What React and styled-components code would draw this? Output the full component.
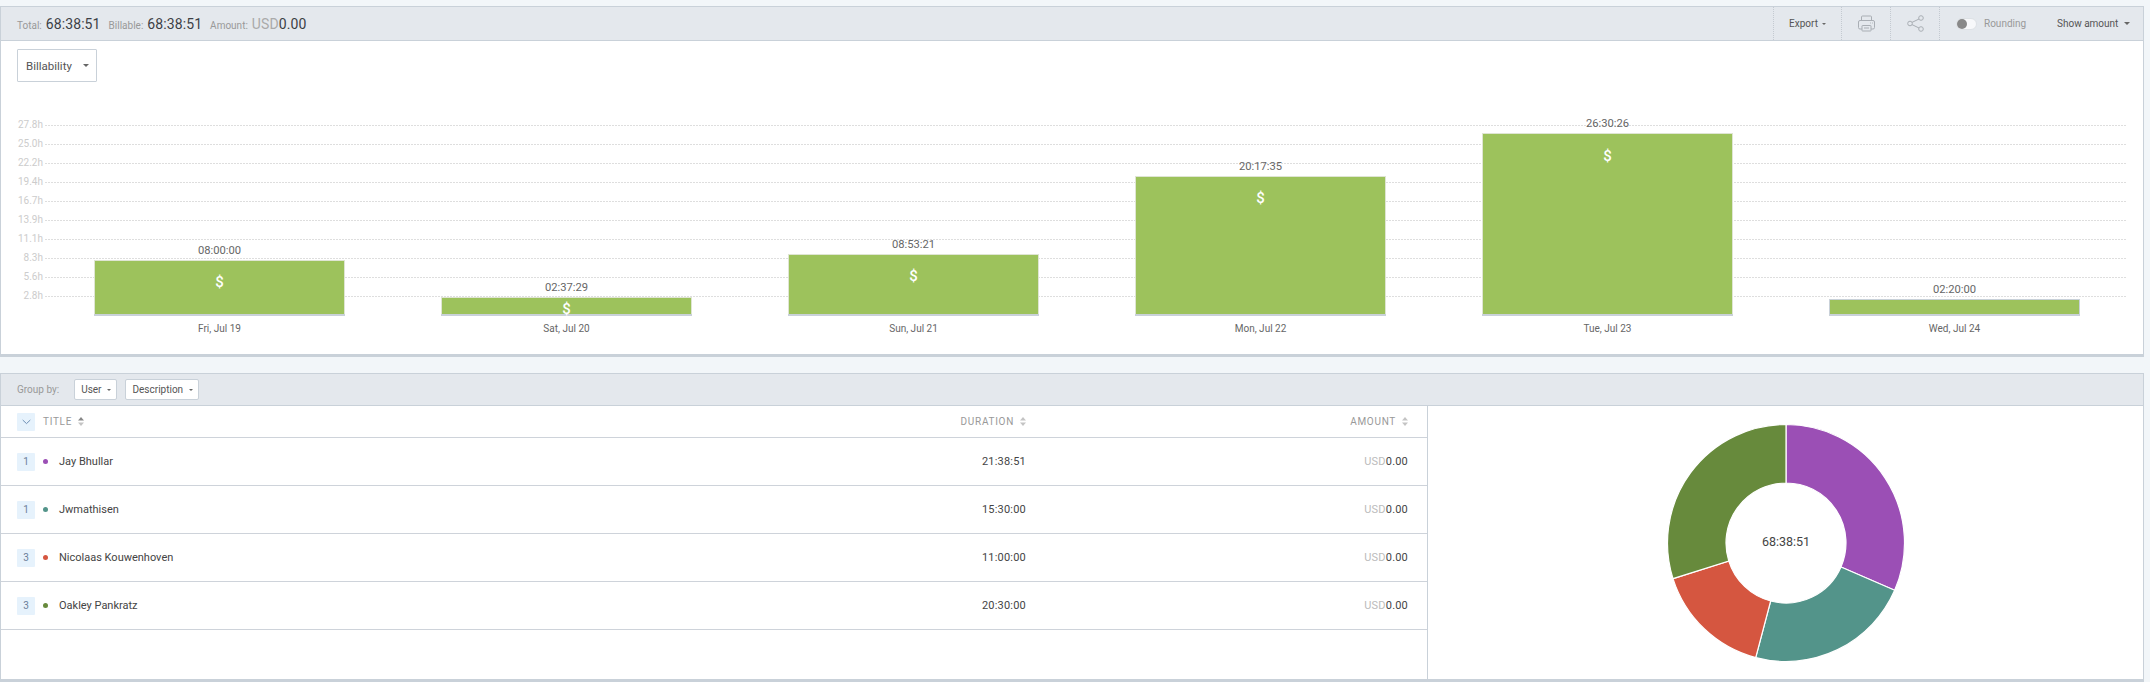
import React from 'react'
import styled, { createGlobalStyle } from 'styled-components'

const GlobalStyle = createGlobalStyle`
    html, body {
        margin: 0;
        padding: 0;
        background: #f2f6f9;
    }
    body {
        font-family: Roboto, "Liberation Sans", sans-serif;
    }
`

const Page = styled.div`
    width: 2144px;
    height: 682px;
    padding-top: 6px;
    box-sizing: border-box;
    overflow: hidden;
`
const Panel = styled.section`
    border: solid #c9d1d9;
    border-width: 1px 1px 3px 1px;
    background: #fff;
    box-sizing: border-box;
    height: ${props => props.height}px;
    margin-bottom: ${props => props.gap || 0}px;
    display: flex;
    flex-direction: column;
`
const Toolbar = styled.header`
    background: #e4e8ed;
    border-bottom: 1px solid #c9d1d9;
    height: ${props => props.height}px;
    flex: none;
    box-sizing: border-box;
    display: flex;
    align-items: center;
    padding-left: 16px;
`
const Stat = styled.span`
    font-size: 10px;
    color: #999;
    margin-right: 8px;
    display: flex;
    align-items: baseline;
    gap: 4px;
`
const StatValue = styled.span`
    font-size: 14px;
    color: #3c3f45;
    letter-spacing: .1px;
`
const Currency = styled.span`
    color: ${props => props.large ? '#aaa' : '#bbb'};
`
const Tools = styled.div`
    margin-left: auto;
    display: flex;
    align-items: stretch;
    height: 100%;
`
const ToolCell = styled.div`
    width: ${props => props.width}px;
    border-left: 1px dotted #c4cad1;
    display: flex;
    align-items: center;
    justify-content: center;
    font-size: 10px;
    color: #555;
    gap: 4px;
    box-sizing: border-box;
`
const Caret = styled.i`
    display: inline-block;
    width: 0;
    height: 0;
    border: solid transparent;
    border-width: ${props => props.size || 3}px ${props => props.size || 3}px 0;
    border-top-color: #666;
`
const RoundingCell = styled.div`
    width: 102px;
    border-left: 1px dotted #c4cad1;
    display: flex;
    align-items: center;
    padding-left: 16px;
    box-sizing: border-box;
    font-size: 10px;
    color: #999;
    gap: 7px;
`
const Switch = styled.span`
    width: 21px;
    height: 12px;
    border-radius: 6px;
    background: #f7f8fa;
    border: 1px solid #dde1e5;
    box-sizing: border-box;
    display: flex;
    align-items: center;
    &::before {
        content: '';
        width: 10px;
        height: 10px;
        border-radius: 50%;
        background: #888;
    }
`
const ShowAmount = styled.div`
    width: 102px;
    display: flex;
    align-items: center;
    padding-left: 16px;
    box-sizing: border-box;
    font-size: 10px;
    color: #555;
    gap: 6px;
`
const ChartBody = styled.div`
    flex: 1;
    padding: 8px 16px 0;
    min-height: 0;
`
const FilterSelect = styled.div`
    width: 80px;
    height: 33px;
    border: 1px solid #c9d1d9;
    border-radius: 1px;
    box-sizing: border-box;
    display: flex;
    align-items: center;
    padding-left: 8px;
    margin-bottom: 8px;
    font-size: 11.5px;
    color: #555;
    gap: 11px;
    background: #fff;
`
const ChartSvg = styled.svg`
    display: block;
    margin-left: -16px;
    font-family: Roboto, "Liberation Sans", sans-serif;
`
const GroupLabel = styled.span`
    font-size: 10px;
    color: #999;
    margin-right: 15px;
`
const GroupSelect = styled.div`
    height: 21px;
    background: #fff;
    border: 1px solid #c9d1d9;
    border-radius: 2px;
    box-sizing: border-box;
    display: flex;
    align-items: center;
    padding: 0 5px 0 6px;
    font-size: 10px;
    color: #555;
    gap: 6px;
    margin-right: 8px;
`
const SplitBody = styled.div`
    flex: 1;
    display: flex;
    min-height: 0;
`
const TableWrap = styled.div`
    width: 1426px;
    flex: none;
    border-right: 1px solid #c9d1d9;
`
const Row = styled.div`
    display: flex;
    align-items: center;
    height: ${props => props.height || 48}px;
    border-bottom: 1px solid #ced3da;
    box-sizing: border-box;
    padding-left: 16px;
    font-size: 11px;
    color: #444;
`
const Badge = styled.span`
    width: 18px;
    height: 18px;
    background: #e6f2fc;
    border-radius: 1px;
    display: flex;
    align-items: center;
    justify-content: center;
    font-size: 10px;
    color: #6b7f99;
    flex: none;
    margin-right: 8px;
`
const TitleCell = styled.div`
    flex: 1;
    display: flex;
    align-items: center;
    min-width: 0;
`
const Dot = styled.i`
    width: 5px;
    height: 5px;
    border-radius: 50%;
    background: ${props => props.color};
    margin-right: 11px;
    flex: none;
`
const NumCell = styled.div`
    width: ${props => props.width}px;
    padding-right: ${props => props.pad || 0}px;
    box-sizing: border-box;
    text-align: right;
    flex: none;
    letter-spacing: .2px;
`
const HeadCell = styled.div`
    width: ${props => props.width}px;
    flex: none;
    display: flex;
    justify-content: flex-end;
    align-items: center;
    font-size: 10px;
    color: #999;
    letter-spacing: .7px;
    gap: 6px;
    padding-right: ${props => props.pad || 0}px;
    box-sizing: border-box;
`
const HeadTitle = styled(TitleCell)`
    font-size: 10px;
    color: #999;
    letter-spacing: .7px;
    gap: 6px;
`
const DonutPane = styled.div`
    flex: 1;
    display: flex;
    align-items: center;
    justify-content: center;
`
const DonutSvg = styled.svg`
    display: block;
    font-family: Roboto, "Liberation Sans", sans-serif;
`

const SortIcon = ({ active }) => (
    <svg width="6" height="9" viewBox="0 0 6 9">
        <path d="M3 0L6 3.4H0Z" fill={active ? '#888' : '#c4c4c4'} />
        <path d="M3 9L0 5.6H6Z" fill="#c4c4c4" />
    </svg>
)

const PrintIcon = () => (
    <svg width="17" height="17" viewBox="0 0 17 17" fill="none" stroke="#a9aeb4" strokeWidth="1">
        <path d="M3.5 5.5V2a1 1 0 0 1 1-1h8a1 1 0 0 1 1 1v3.5" />
        <rect x=".5" y="5.5" width="16" height="8.5" rx="1.5" />
        <rect x="4" y="10.5" width="9" height="5.5" rx=".5" fill="#e4e8ed" />
        <path d="M6 13h5M12 8h.8M14 8h.8" />
    </svg>
)

const ShareIcon = () => (
    <svg width="17" height="17" viewBox="0 0 17 17" fill="none" stroke="#a9aeb4" strokeWidth="1">
        <circle cx="3" cy="8.5" r="2.3" />
        <circle cx="14" cy="3" r="2.3" />
        <circle cx="14" cy="14" r="2.3" />
        <path d="M5 7.4l7-3.4M5 9.6l7 3.4" />
    </svg>
)

const ChevronIcon = () => (
    <svg width="9" height="6" viewBox="0 0 9 6" fill="none" stroke="#6f8fb5" strokeWidth="1">
        <path d="M.7 1l3.8 3.6L8.3 1" />
    </svg>
)

const axisTicks = ['27.8h', '25.0h', '22.2h', '19.4h', '16.7h', '13.9h', '11.1h', '8.3h', '5.6h', '2.8h']

const bars = [
    { x: 94, top: 260, time: '08:00:00', date: 'Fri, Jul 19', moneyY: 287 },
    { x: 441, top: 297, time: '02:37:29', date: 'Sat, Jul 20', moneyY: 314 },
    { x: 788, top: 254, time: '08:53:21', date: 'Sun, Jul 21', moneyY: 281 },
    { x: 1135, top: 176, time: '20:17:35', date: 'Mon, Jul 22', moneyY: 203 },
    { x: 1482, top: 133, time: '26:30:26', date: 'Tue, Jul 23', moneyY: 161 },
    { x: 1829, top: 299, time: '02:20:00', date: 'Wed, Jul 24', edge: '#c9d1d9' },
]

const BarChart = () => (
    <ChartSvg width="2142" height="264" viewBox="1 90 2142 264">
        {axisTicks.map((tick, i) => {
            const y = 125.5 + i * 19
            return (
                <g key={tick}>
                    <line x1="45" x2="2126" y1={y} y2={y} stroke="#dedede" strokeDasharray="2 1" />
                    <text x="43" y={y + 2.5} textAnchor="end" fontSize="10" fill="#ccc">{tick}</text>
                </g>
            )
        })}
        {bars.map(bar => (
            <g key={bar.date}>
                <rect x={bar.x} y={bar.top} width="251" height={314 - bar.top} fill={bar.edge || '#dfe5d3'} />
                <rect x={bar.x} y="314" width="251" height="2" fill="#c9d1d9" />
                <rect x={bar.x + 1} y={bar.top + 1} width="249" height={313 - bar.top} fill="#9dc25c" />
                <text x={bar.x + 125.5} y={bar.top - 6} textAnchor="middle" fontSize="11.2" fill="#666">{bar.time}</text>
                {bar.moneyY && (
                    <text x={bar.x + 125.5} y={bar.moneyY} textAnchor="middle" fontSize="15" fontWeight="500" fill="#fff">$</text>
                )}
                <text x={bar.x + 125.5} y="332" textAnchor="middle" fontSize="10" fill="#666">{bar.date}</text>
            </g>
        ))}
    </ChartSvg>
)

const people = [
    { count: 1, name: 'Jay Bhullar', color: '#9b4fb5', time: '21:38:51', seconds: 77931 },
    { count: 1, name: 'Jwmathisen', color: '#53948a', time: '15:30:00', seconds: 55800 },
    { count: 3, name: 'Nicolaas Kouwenhoven', color: '#d55640', time: '11:00:00', seconds: 39600 },
    { count: 3, name: 'Oakley Pankratz', color: '#678a3c', time: '20:30:00', seconds: 73800 },
]

const polar = (r, a) => {
    const rad = (a - 90) * Math.PI / 180
    return [(120 + r * Math.cos(rad)).toFixed(2), (120 + r * Math.sin(rad)).toFixed(2)]
}

const slicePath = (from, to) => {
    const large = to - from > 180 ? 1 : 0
    const [x1, y1] = polar(118.5, from)
    const [x2, y2] = polar(118.5, to)
    const [x3, y3] = polar(60, to)
    const [x4, y4] = polar(60, from)
    return `M${x1} ${y1}A118.5 118.5 0 ${large} 1 ${x2} ${y2}L${x3} ${y3}A60 60 0 ${large} 0 ${x4} ${y4}Z`
}

const Donut = () => {
    const total = people.reduce((sum, p) => sum + p.seconds, 0)
    let angle = 0
    return (
        <DonutSvg width="240" height="240" viewBox="0 0 240 240">
            {people.map(p => {
                const from = angle
                angle += p.seconds / total * 360
                return <path key={p.name} d={slicePath(from, angle)} fill={p.color} stroke="#fff" strokeWidth="1.2" />
            })}
            <text x="120" y="123" textAnchor="middle" fontSize="12.5" fill="#444">68:38:51</text>
        </DonutSvg>
    )
}

export default function App() {
    return (
        <Page>
            <GlobalStyle />
            <Panel height={351} gap={16}>
                <Toolbar height={34}>
                    <Stat>Total: <StatValue>68:38:51</StatValue></Stat>
                    <Stat>Billable: <StatValue>68:38:51</StatValue></Stat>
                    <Stat>Amount: <StatValue><Currency large>USD</Currency>0.00</StatValue></Stat>
                    <Tools>
                        <ToolCell width={68}>Export <Caret size={2} /></ToolCell>
                        <ToolCell width={49}><PrintIcon /></ToolCell>
                        <ToolCell width={49}><ShareIcon /></ToolCell>
                        <RoundingCell><Switch />Rounding</RoundingCell>
                        <ShowAmount>Show amount <Caret /></ShowAmount>
                    </Tools>
                </Toolbar>
                <ChartBody>
                    <FilterSelect>Billability <Caret /></FilterSelect>
                    <BarChart />
                </ChartBody>
            </Panel>
            <Panel height={309}>
                <Toolbar height={32}>
                    <GroupLabel>Group by:</GroupLabel>
                    <GroupSelect>User <Caret size={2} /></GroupSelect>
                    <GroupSelect>Description <Caret size={2} /></GroupSelect>
                </Toolbar>
                <SplitBody>
                    <TableWrap>
                        <Row height={32}>
                            <Badge><ChevronIcon /></Badge>
                            <HeadTitle>TITLE <SortIcon active /></HeadTitle>
                            <HeadCell width={300}>DURATION <SortIcon /></HeadCell>
                            <HeadCell width={401} pad={19}>AMOUNT <SortIcon /></HeadCell>
                        </Row>
                        {people.map(p => (
                            <Row key={p.name}>
                                <Badge>{p.count}</Badge>
                                <TitleCell><Dot color={p.color} />{p.name}</TitleCell>
                                <NumCell width={300}>{p.time}</NumCell>
                                <NumCell width={401} pad={19}><Currency>USD</Currency>0.00</NumCell>
                            </Row>
                        ))}
                    </TableWrap>
                    <DonutPane><Donut /></DonutPane>
                </SplitBody>
            </Panel>
        </Page>
    )
}
